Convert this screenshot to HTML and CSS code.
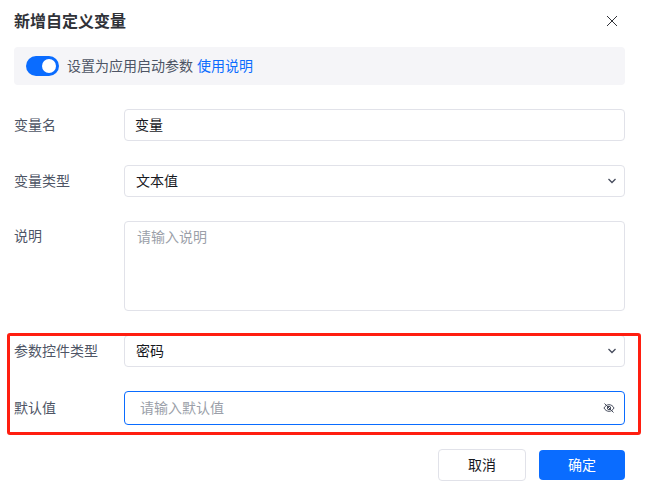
FILE: index.html
```html
<!DOCTYPE html>
<html lang="zh-CN">
<head>
<meta charset="utf-8">
<meta name="viewport" content="width=device-width, initial-scale=1">
<title>新增自定义变量</title>
<link rel="stylesheet" href="styles.css">
</head>
<body>
<main class="dialog">
  <header class="dialog-header">
    <h1>新增自定义变量</h1>
    <button class="close" type="button" aria-label="关闭">
      <svg width="12" height="12" viewBox="0 0 12 12"><path d="M1 1l10 10M11 1L1 11"/></svg>
    </button>
  </header>

  <form class="form">
    <div class="banner">
      <input class="switch" type="checkbox" role="switch" id="startup" checked>
      <label for="startup">设置为应用启动参数</label>
      <a href="#">使用说明</a>
    </div>

    <div class="row">
      <label for="name">变量名</label>
      <input class="control" type="text" id="name" value="变量">
    </div>

    <div class="row">
      <label for="type">变量类型</label>
      <div class="field">
        <select class="control select" id="type">
          <option>文本值</option>
        </select>
        <svg class="arrow" width="10" height="6" viewBox="0 0 10 6"><path d="M1.500 1L5 4.500 8.500 1"/></svg>
      </div>
    </div>

    <div class="row row-top">
      <label for="desc">说明</label>
      <textarea class="control textarea" id="desc" placeholder="请输入说明"></textarea>
    </div>

    <!-- highlighted group -->
    <div class="marked">
      <div class="row">
        <label for="widget">参数控件类型</label>
        <div class="field">
          <select class="control select" id="widget">
            <option>密码</option>
          </select>
          <svg class="arrow" width="10" height="6" viewBox="0 0 10 6"><path d="M1.500 1L5 4.500 8.500 1"/></svg>
        </div>
      </div>

      <div class="row">
        <label for="default">默认值</label>
        <div class="field">
          <input class="control password" type="password" id="default" placeholder="请输入默认值">
          <button class="eye" type="button" aria-label="显示密码">
            <svg width="12" height="12" viewBox="0 0 12 12">
              <path d="M1 6c1.200-2.200 2.900-3.300 5-3.300S9.800 3.800 11 6C9.800 8.200 8.100 9.300 6 9.300S2.200 8.200 1 6z"/>
              <circle cx="6" cy="6" r="1.700"/>
              <path d="M1.500 1.500l9 9"/>
            </svg>
          </button>
        </div>
      </div>
    </div>

    <footer class="actions">
      <button class="btn" type="button">取消</button>
      <button class="btn btn-primary" type="submit">确定</button>
    </footer>
  </form>
</main>
</body>
</html>
```
FILE: styles.css
```css
* {
  box-sizing: border-box;
}

body {
  margin: 0;
  background: #fff;
  color: #4e5565;
}

body, button, input, select, textarea {
  font-family: "Noto Sans CJK SC", sans-serif;
  font-size: 14px;
  line-height: 20px;
}

a {
  color: #0a6cff;
  text-decoration: none;
}

.dialog {
  padding: 10px 24px 22px 14px;
}

.dialog-header {
  display: flex;
  align-items: center;
  justify-content: space-between;
  height: 22px;
  margin-bottom: 15px;
}

.dialog-header h1 {
  margin: 0;
  padding-bottom: 2px;
  color: #303238;
  font-size: 16px;
  line-height: 22px;
  font-weight: 700;
}

.close, .eye {
  display: flex;
  padding: 0;
  border: none;
  background: none;
  cursor: pointer;
}

.close {
  margin-right: 7px;
}

svg {
  fill: none;
  stroke: #303238;
  stroke-width: 1;
}

.form {
  display: flex;
  flex-direction: column;
  gap: 24px;
}

.banner {
  display: flex;
  align-items: center;
  height: 38px;
  padding: 0 12px;
  border-radius: 4px;
  background: #f5f5f8;
}

.banner label, .banner a {
  padding-bottom: 2px;
}

.banner a {
  margin-left: 4px;
}

.switch {
  appearance: none;
  width: 33px;
  height: 20px;
  margin: 0 8px 0 0;
  padding: 3px;
  border-radius: 10px;
  background: #c4c8d0;
  cursor: pointer;
}

.switch::before {
  content: "";
  display: block;
  width: 14px;
  height: 14px;
  border-radius: 50%;
  background: #fff;
}

.switch:checked {
  background: #0a6cff;
}

.switch:checked::before {
  margin-left: auto;
}

.row {
  display: grid;
  grid-template-columns: 110px 1fr;
  align-items: center;
}

.row label {
  padding-bottom: 2px;
}

.row-top {
  align-items: start;
}

.row-top label {
  padding-top: 4px;
}

.field {
  display: grid;
  align-items: center;
}

.field > * {
  grid-area: 1 / 1;
}

.control {
  display: block;
  width: 100%;
  height: 32px;
  margin: 0;
  padding: 0 10px 2px;
  border: 1px solid #e1e2e9;
  border-radius: 4px;
  outline: none;
  background: #fff;
  color: #17191e;
}

.control::placeholder {
  color: #9b9fa9;
}

.select {
  appearance: none;
  padding: 0 24px 2px 11px;
}

.arrow {
  justify-self: end;
  margin-right: 8px;
  stroke: #454b5c;
  stroke-width: 1.3;
  pointer-events: none;
}

.textarea {
  height: 90px;
  padding: 4px 12px;
  resize: none;
}

.password {
  height: 34px;
  padding: 0 32px 2px 15px;
  border-color: #0a6cff;
}

.eye {
  justify-self: end;
  margin-right: 10px;
}

.eye svg {
  stroke: #454b5c;
}

.marked {
  position: relative;
  display: flex;
  flex-direction: column;
  gap: 24px;
}

/* red frame drawn over the two fields */
.marked::after {
  content: "";
  position: absolute;
  inset: -2px -16px -10px -7px;
  border: 3px solid #ff1e10;
  border-radius: 3px;
  pointer-events: none;
}

.actions {
  display: flex;
  align-items: center;
  justify-content: flex-end;
  gap: 13px;
}

.btn {
  width: 88px;
  height: 32px;
  padding: 0 0 2px;
  border: 1px solid #e1e2e9;
  border-radius: 4px;
  background: #fff;
  color: #17191e;
  cursor: pointer;
}

.btn-primary {
  width: 86px;
  height: 30px;
  border: none;
  background: #0a6cff;
  color: #fff;
}
```
